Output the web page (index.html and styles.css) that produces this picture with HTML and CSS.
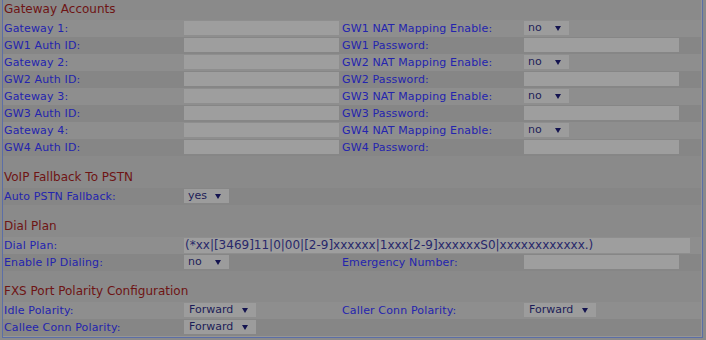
FILE: index.html
```html
<!DOCTYPE html>
<html>
<head>
<meta charset="utf-8">
<link rel="stylesheet" href="styles.css">
</head>
<body>
<div class="panel">
  <div class="sec-title">Gateway Accounts</div>
  <div class="row light"><div class="lbl">Gateway 1:</div><div class="cell"><span class="inp"></span></div><div class="lbl">GW1 NAT Mapping Enable:</div><div class="cell"><span class="sel w45">no<svg class="arr" width="6" height="5" viewBox="0 0 6 5"><path d="M0 0H6L3 5Z"/></svg></span></div><div class="rest"></div></div>
  <div class="row dark"><div class="lbl">GW1 Auth ID:</div><div class="cell"><span class="inp"></span></div><div class="lbl">GW1 Password:</div><div class="cell"><span class="inp"></span></div><div class="rest"></div></div>
  <div class="row light"><div class="lbl">Gateway 2:</div><div class="cell"><span class="inp"></span></div><div class="lbl">GW2 NAT Mapping Enable:</div><div class="cell"><span class="sel w45">no<svg class="arr" width="6" height="5" viewBox="0 0 6 5"><path d="M0 0H6L3 5Z"/></svg></span></div><div class="rest"></div></div>
  <div class="row dark"><div class="lbl">GW2 Auth ID:</div><div class="cell"><span class="inp"></span></div><div class="lbl">GW2 Password:</div><div class="cell"><span class="inp"></span></div><div class="rest"></div></div>
  <div class="row light"><div class="lbl">Gateway 3:</div><div class="cell"><span class="inp"></span></div><div class="lbl">GW3 NAT Mapping Enable:</div><div class="cell"><span class="sel w45">no<svg class="arr" width="6" height="5" viewBox="0 0 6 5"><path d="M0 0H6L3 5Z"/></svg></span></div><div class="rest"></div></div>
  <div class="row dark"><div class="lbl">GW3 Auth ID:</div><div class="cell"><span class="inp"></span></div><div class="lbl">GW3 Password:</div><div class="cell"><span class="inp"></span></div><div class="rest"></div></div>
  <div class="row light"><div class="lbl">Gateway 4:</div><div class="cell"><span class="inp"></span></div><div class="lbl">GW4 NAT Mapping Enable:</div><div class="cell"><span class="sel w45">no<svg class="arr" width="6" height="5" viewBox="0 0 6 5"><path d="M0 0H6L3 5Z"/></svg></span></div><div class="rest"></div></div>
  <div class="row dark"><div class="lbl">GW4 Auth ID:</div><div class="cell"><span class="inp"></span></div><div class="lbl">GW4 Password:</div><div class="cell"><span class="inp"></span></div><div class="rest"></div></div>

  <div class="spacer"></div>
  <div class="sec-title">VoIP Fallback To PSTN</div>
  <div class="row dark"><div class="lbl">Auto PSTN Fallback:</div><div class="cell"><span class="sel w45">yes<svg class="arr" width="6" height="5" viewBox="0 0 6 5"><path d="M0 0H6L3 5Z"/></svg></span></div><div class="lbl"></div><div class="cell"></div><div class="rest"></div></div>

  <div class="spacer"></div>
  <div class="sec-title">Dial Plan</div>
  <div class="row light wide"><div class="lbl">Dial Plan:</div><div class="cell span"><span class="inp dial">(*xx|[3469]11|0|00|[2-9]xxxxxx|1xxx[2-9]xxxxxxS0|xxxxxxxxxxxx.)</span></div></div>
  <div class="row dark"><div class="lbl">Enable IP Dialing:</div><div class="cell"><span class="sel w45">no<svg class="arr" width="6" height="5" viewBox="0 0 6 5"><path d="M0 0H6L3 5Z"/></svg></span></div><div class="lbl">Emergency Number:</div><div class="cell"><span class="inp"></span></div><div class="rest"></div></div>

  <div class="spacer last"></div>
  <div class="sec-title">FXS Port Polarity Configuration</div>
  <div class="row light"><div class="lbl">Idle Polarity:</div><div class="cell"><span class="sel w72">Forward<svg class="arr" width="6" height="5" viewBox="0 0 6 5"><path d="M0 0H6L3 5Z"/></svg></span></div><div class="lbl">Caller Conn Polarity:</div><div class="cell"><span class="sel w72">Forward<svg class="arr" width="6" height="5" viewBox="0 0 6 5"><path d="M0 0H6L3 5Z"/></svg></span></div><div class="rest"></div></div>
  <div class="row dark"><div class="lbl">Callee Conn Polarity:</div><div class="cell"><span class="sel w72">Forward<svg class="arr" width="6" height="5" viewBox="0 0 6 5"><path d="M0 0H6L3 5Z"/></svg></span></div><div class="lbl"></div><div class="cell"></div><div class="rest"></div></div>
</div>
</body>
</html>
```

FILE: styles.css
```css
html, body {
  margin: 0;
  padding: 0;
  background: #8a8a8a;
  font-family: "DejaVu Sans", Verdana, sans-serif;
  font-size: 11px;
}

.panel {
  margin-left: 2px;
  width: 699px;
  box-sizing: content-box;
  border-left: 1px solid #5b6ea6;
  border-right: 1px solid #5b6ea6;
  border-bottom: 1px solid #5b6ea6;
  padding-bottom: 1px;
  box-shadow: inset -1px -1px 0 #959595;
  height: 336px;
  overflow: hidden;
}

.sec-title {
  height: 18px;
  padding-top: 2px;
  padding-left: 1px;
  font-size: 12px;
  line-height: 14px;
  color: #6e1414;
  width: 698px;
}

.spacer {
  height: 12px;
}

.spacer.last {
  height: 11px;
}

.row {
  display: grid;
  grid-template-columns: 181px 157px 183px 157px 20px;
  height: 17px;
  width: 698px;
}

.row.wide {
  grid-template-columns: 181px 517px;
}

.row.light {
  background: #8e8e8e;
}

.row.dark {
  background: #868686;
}

.lbl {
  padding-left: 1px;
  color: #2424ae;
  line-height: 18px;
  letter-spacing: 0.15px;
  white-space: nowrap;
  overflow: hidden;
}

.cell {
  padding-top: 1px;
}

.inp {
  display: block;
  width: 155px;
  height: 14px;
  background: #9e9e9e;
}

.inp.dial {
  width: 505px;
  height: 15px;
  padding-left: 1px;
  font-size: 12px;
  line-height: 15px;
  color: #28286a;
  white-space: nowrap;
  overflow: hidden;
}

.sel {
  display: flex;
  align-items: center;
  justify-content: space-between;
  box-sizing: border-box;
  height: 14px;
  padding-left: 4px;
  padding-right: 8px;
  background: #9c9c9c;
  color: #1c1c58;
  line-height: 14px;
}

.sel.w45 {
  width: 45px;
}

.sel.w72 {
  width: 72px;
  padding-left: 5px;
}

.arr {
  fill: #141450;
  display: block;
}
```
